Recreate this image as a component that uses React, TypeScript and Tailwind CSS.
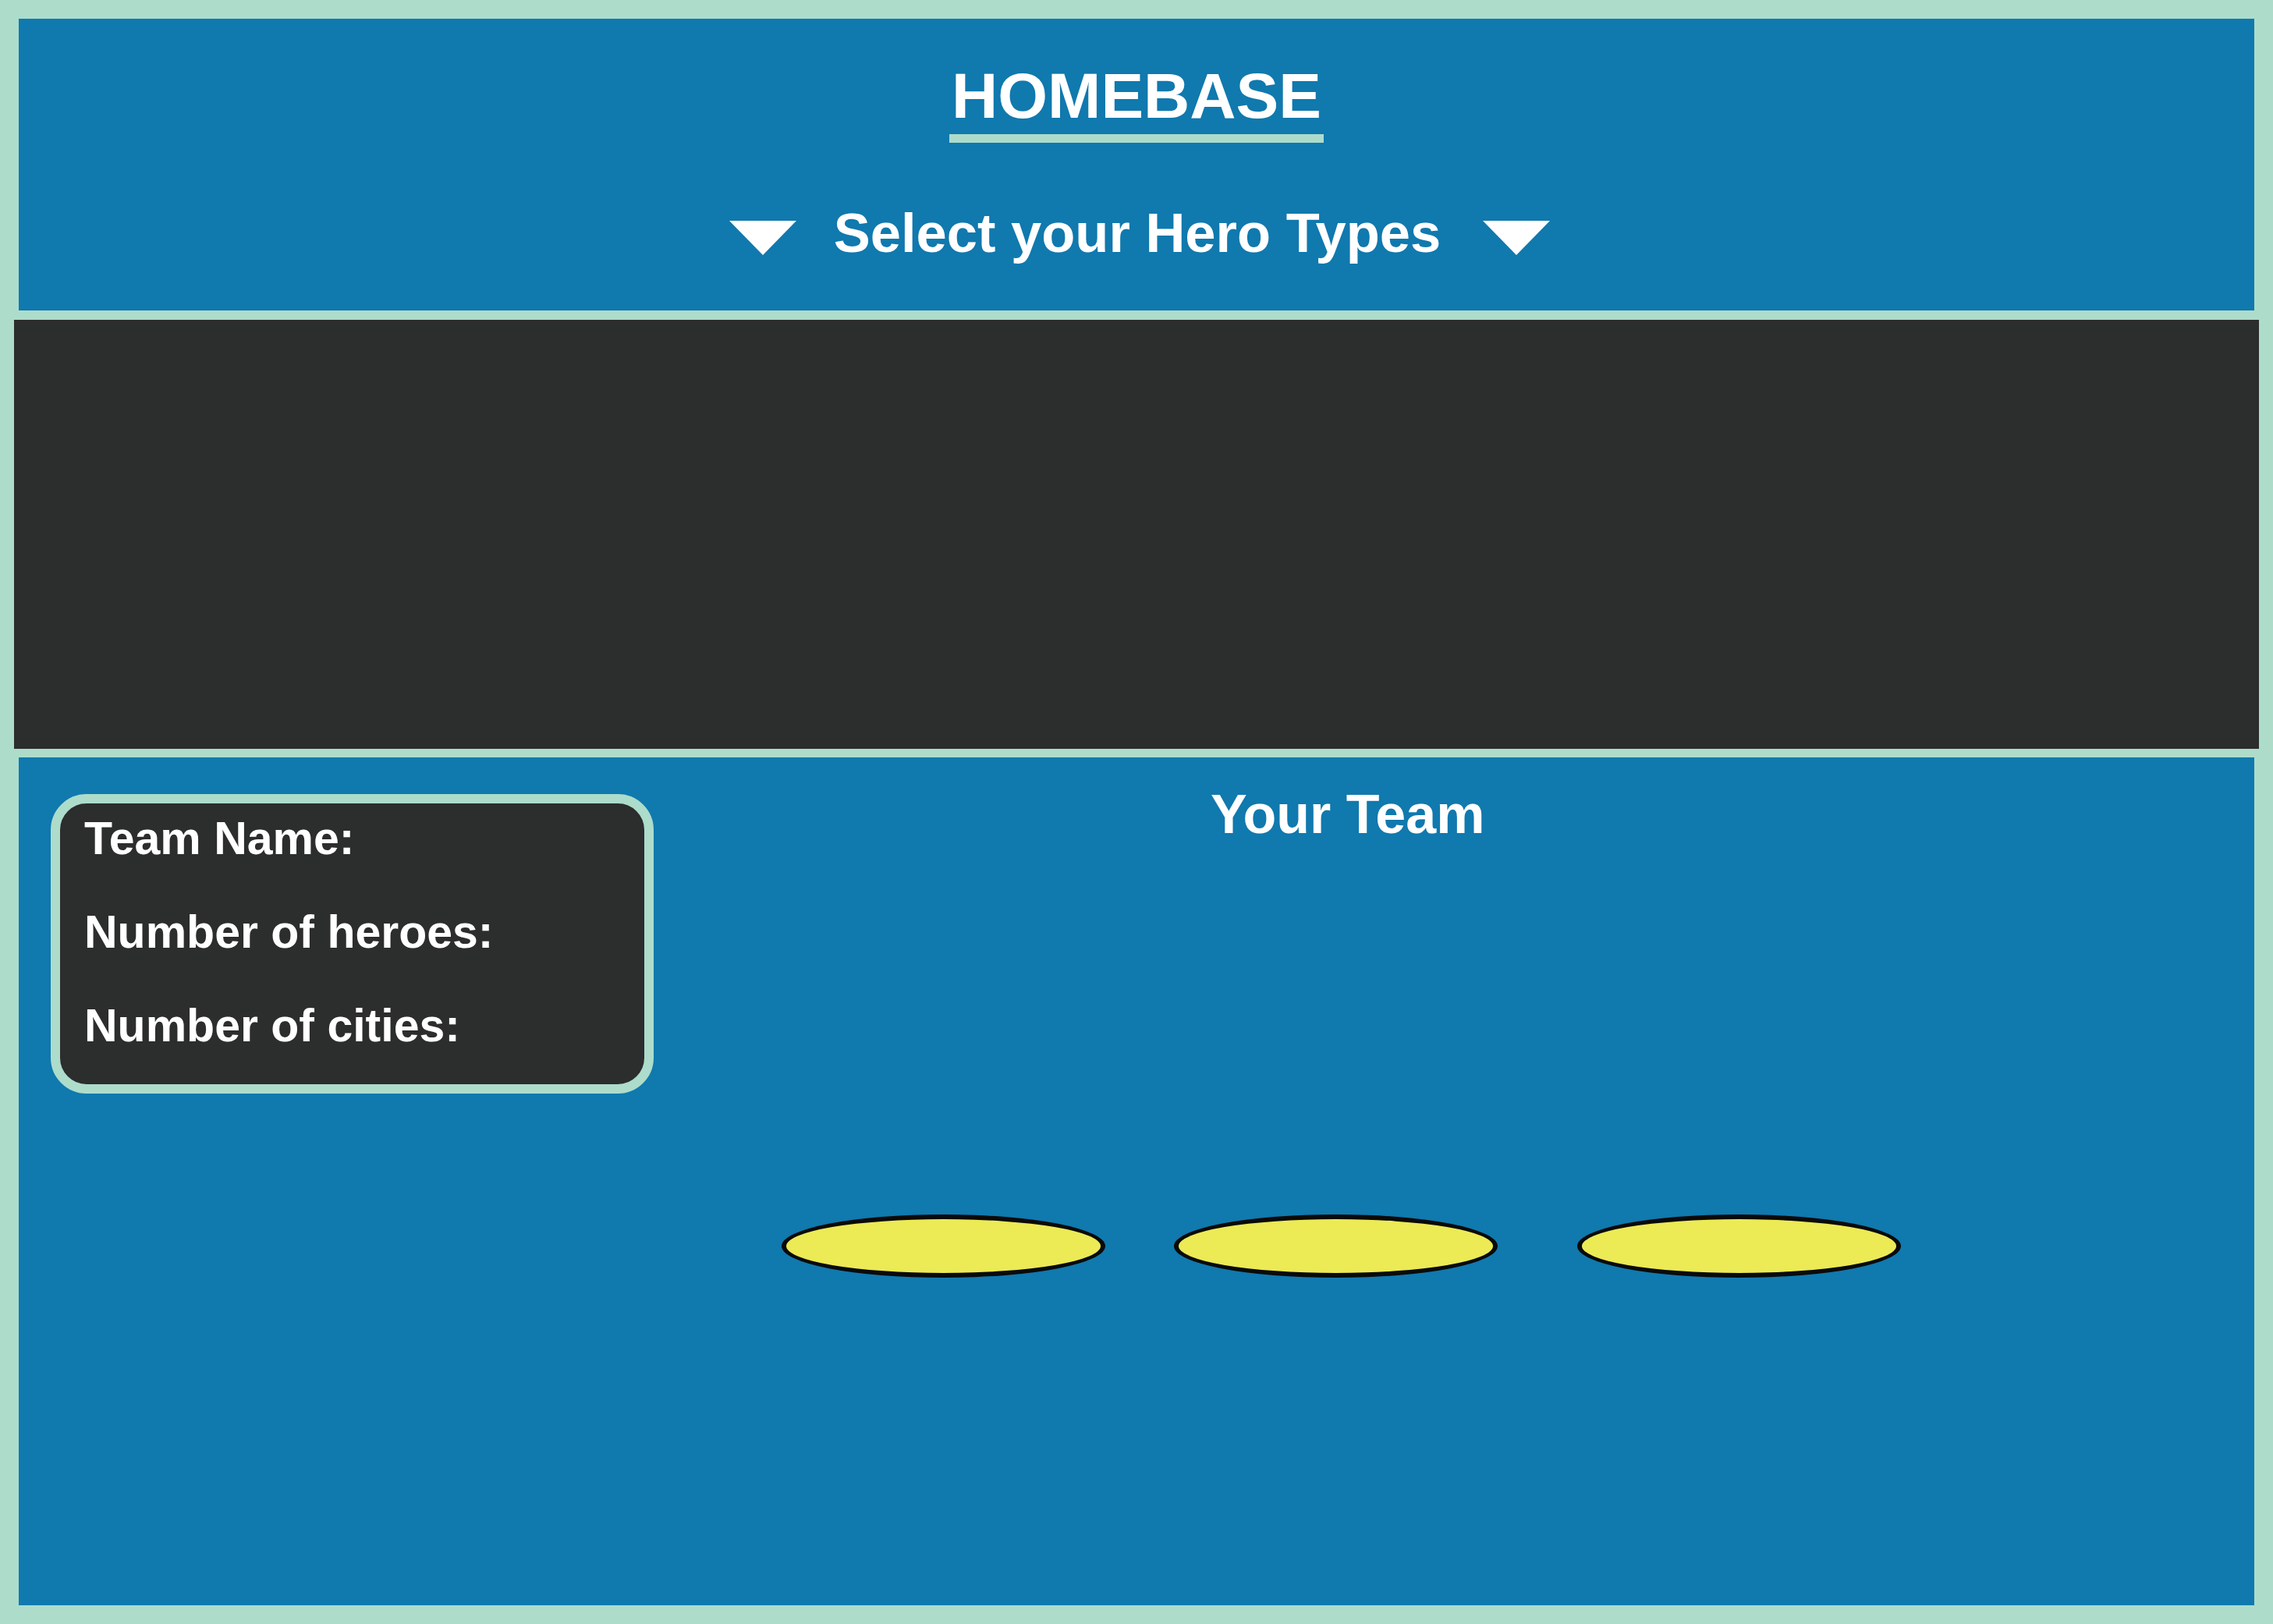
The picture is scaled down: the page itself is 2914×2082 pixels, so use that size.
const ellipses = [
  { ml: "ml-[164px]" },
  { ml: "ml-[88px]" },
  { ml: "ml-[102px]" },
];

function Arrow() {
  return (
    <svg width="86" height="44" viewBox="0 0 86 44" className="mt-[19px] shrink-0">
      <polygon points="0,0 86,0 43,44" fill="#ffffff" />
    </svg>
  );
}

export default function App() {
  return (
    <div
      className="flex h-[2082px] w-[2914px] flex-col bg-[#addccb] pt-[24px] text-white"
      style={{ fontFamily: '"Liberation Sans", Arial, sans-serif' }}
    >
      {/* header */}
      <header className="mx-[24px] flex h-[374px] flex-col items-center bg-[#1079ae] pt-[58px]">
        <div className="flex flex-col items-stretch">
          <h1 className="text-[82px] font-bold leading-none">HOMEBASE</h1>
          <div className="-mx-[3px] mt-[8px] h-[11px] bg-[#addccb]" />
        </div>
        <div className="ml-[8px] mt-[81px] flex items-start gap-[48px]">
          <Arrow />
          <span className="mr-[6px] text-[70.5px] font-bold leading-none">Select your Hero Types</span>
          <Arrow />
        </div>
      </header>

      {/* hero picker band */}
      <section className="mx-[18px] mt-[12px] h-[550px] bg-[#2c2d2d]" />

      {/* team area */}
      <section className="mx-[24px] mt-[11px] flex h-[1087px] items-start bg-[#1079ae] pl-[41px] pt-[38px]">
        <div className="mt-[9px] flex h-[384px] w-[773px] shrink-0 flex-col gap-[61px] rounded-[46px] border-[12px] border-[#addccb] bg-[#2c2d2d] pl-[31px] pt-[16px] text-[59px] font-bold leading-none">
          <div>Team Name:</div>
          <div>Number of heroes:</div>
          <div>Number of cities:</div>
        </div>

        <div className="flex flex-col">
          <h2 className="ml-[714px] text-[70px] font-bold leading-none">Your Team</h2>
          <div className="mt-[478px] flex">
            {ellipses.map((e, i) => (
              <div
                key={i}
                className={`${e.ml} h-[81px] w-[415px] rounded-[50%] border-[6px] border-[#0a0a0a] bg-[#ecea55]`}
              />
            ))}
          </div>
        </div>
      </section>
    </div>
  );
}
